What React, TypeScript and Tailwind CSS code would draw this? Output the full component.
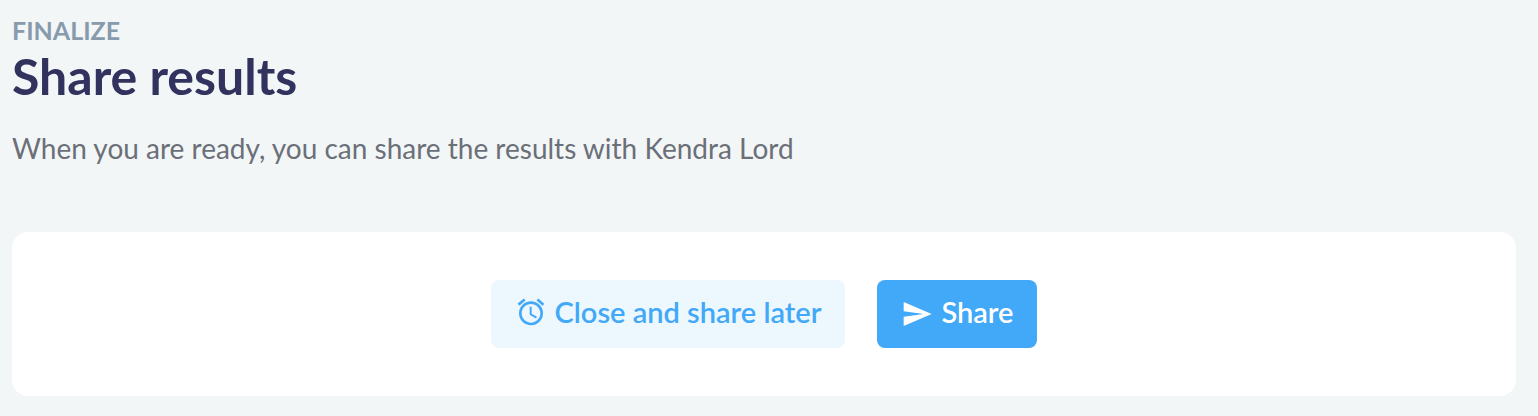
import { MdAlarm, MdSend } from 'react-icons/md';

const recipient = 'Kendra Lord';

export default function App() {
  return (
    <main className="min-h-screen bg-[#f2f6f7] pt-4 pl-3 pr-[22px] pb-5 font-['Lato',sans-serif]">
      {/* Heading */}
      <header>
        <p className="text-[25px] leading-7 font-bold uppercase text-[#879bac]">Finalize</p>
        <h1 className="text-[50px] leading-16 font-bold text-[#31325e]">Share results</h1>
        <p className="mt-6 text-[28px] leading-8 text-[#6b6f78]">
          When you are ready, you can share the results with {recipient}
        </p>
      </header>

      {/* Actions */}
      <section className="mt-17 flex flex-wrap justify-center gap-8 rounded-2xl bg-white p-12">
        <button
          type="button"
          className="flex h-17 items-center gap-2 rounded-lg bg-[#ecf7fe] px-6 pb-1 text-[29px] font-semibold text-[#42a8f8]"
        >
          <MdAlarm className="size-8" />
          Close and share later
        </button>
        <button
          type="button"
          className="flex h-17 items-center gap-2 rounded-lg bg-[#42a8f8] px-6 text-[29px] font-semibold text-white"
        >
          <MdSend className="size-8" />
          <span className="pb-1">Share</span>
        </button>
      </section>
    </main>
  );
}
